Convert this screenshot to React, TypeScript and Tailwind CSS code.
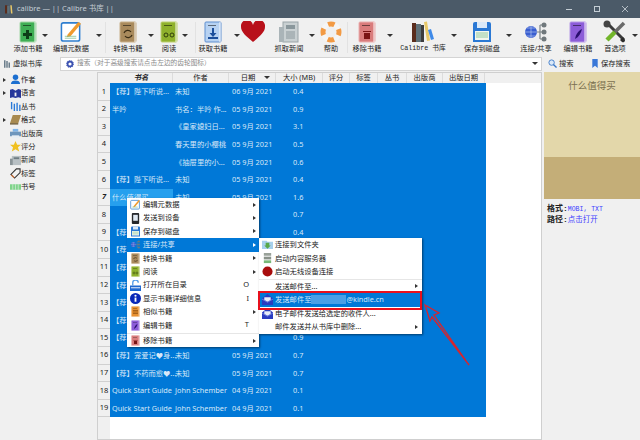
import type { ReactNode } from "react";

const cjk = "font-['Noto_Sans','Noto_Sans_CJK_SC',sans-serif]";

// little book used by most toolbar buttons
function Book({ fill, edge, children }: { fill: string; edge: string; children?: ReactNode }) {
  return (
    <svg viewBox="0 0 18 22" width="18" height="22">
      <rect x="1" y="1" width="16" height="20" rx="1" fill={fill} stroke={edge} strokeWidth="1" />
      <rect x="15" y="1" width="2" height="20" fill="#ffffff" opacity="0.45" />
      <rect x="4" y="4" width="8" height="1" fill="#000000" opacity="0.5" />
      {children}
    </svg>
  );
}

const icons: Record<string, ReactNode> = {
  add: (
    <Book fill="#3fae55" edge="#a5d8a8">
      <path d="M7 9h3v3h3v3h-3v3H7v-3H4v-3h3z" fill="#0d3d18" />
    </Book>
  ),
  meta: (
    <svg viewBox="0 0 24 24" width="23" height="23">
      <rect x="1.500" y="3" width="19" height="19" rx="2" fill="#fff" stroke="#2f7fd0" strokeWidth="1.600" />
      <path d="M8 15 19 2l3 2-11 13-4 1z" fill="#f09a2c" />
      <path d="M5 17h12M5 19h12" stroke="#7cc08a" strokeWidth="0.800" />
    </svg>
  ),
  convert: (
    <Book fill="#a98a5c" edge="#c9b08a">
      <path d="M5 12a4 4 0 0 1 7-1M13 14a4 4 0 0 1-7 1" fill="none" stroke="#3a2c14" strokeWidth="1.200" />
    </Book>
  ),
  read: (
    <Book fill="#8fb12c" edge="#bcd070">
      <circle cx="6" cy="14" r="2" fill="none" stroke="#2f3d0a" />
      <circle cx="12" cy="14" r="2" fill="none" stroke="#2f3d0a" />
    </Book>
  ),
  fetch: (
    <Book fill="#b7d2f2" edge="#5f8fd0">
      <path d="M8 7h2v5h2.500L9 16l-3.500-4H8zM4 16v2h10v-2" fill="#1c4f9c" />
    </Book>
  ),
  heart: (
    <svg viewBox="0 0 24 22" width="24" height="22">
      <path d="M12 21C5 15 0 11 0 6a6 6 0 0 1 12-2 6 6 0 0 1 12 2c0 5-5 9-12 15z" fill="#b8101a" />
    </svg>
  ),
  news: (
    <svg viewBox="0 0 22 22" width="22" height="22">
      <rect x="5" y="1" width="15" height="20" fill="#c9d0d2" stroke="#9aa4a8" />
      <rect x="1" y="6" width="5" height="15" fill="#aab4b8" />
      <rect x="8" y="4" width="9" height="4" fill="#8a979c" />
      <path d="M8 11h9M8 13h9M8 15h9M8 17h9" stroke="#7d8a8f" strokeWidth="0.800" />
    </svg>
  ),
  help: (
    <svg viewBox="0 0 22 22" width="22" height="22">
      <circle cx="11" cy="11" r="8" fill="none" stroke="#f5f5f5" strokeWidth="5" />
      <circle cx="11" cy="11" r="8" fill="none" stroke="#f29a44" strokeWidth="5" strokeDasharray="6.500 6.070" strokeDashoffset="3.200" />
    </svg>
  ),
  remove: (
    <Book fill="#d97c7c" edge="#eab0b0">
      <path d="M5 10h8v1H5zM6 12h6v6H6z" fill="#7a1414" />
    </Book>
  ),
  library: (
    <svg viewBox="0 0 24 22" width="24" height="22">
      <rect x="1" y="2" width="4" height="19" fill="#5a2c1c" />
      <rect x="5" y="3" width="5" height="18" fill="#5e7078" />
      <rect x="10" y="4" width="3" height="17" fill="#3c3c3c" />
      <path d="m13 1 3-.500 3 19-3 .500z" fill="#e8c868" />
      <path d="m17 9 3-1 3 10-3 1z" fill="#3f8ae8" />
    </svg>
  ),
  save: (
    <svg viewBox="0 0 20 22" width="20" height="22">
      <path d="M1 3a2 2 0 0 1 2-2h14a2 2 0 0 1 2 2v18H1z" fill="#2a78d4" />
      <rect x="5" y="1" width="10" height="6" fill="#dbe9f8" />
      <rect x="3" y="10" width="14" height="9" fill="#f2f6ee" />
      <path d="M4 12h12M4 14h12M4 16h12" stroke="#7cc08a" strokeWidth="0.800" />
    </svg>
  ),
  connect: (
    <svg viewBox="0 0 26 22" width="26" height="22">
      <path d="M13 11h4M17 4v14M17 4h3M17 11h3M17 18h3" stroke="#7a8286" strokeWidth="1.200" fill="none" />
      <circle cx="21" cy="4" r="2.500" fill="#70787c" />
      <circle cx="21" cy="11" r="2.500" fill="#70787c" />
      <circle cx="21" cy="18" r="2.500" fill="#70787c" />
      <circle cx="8" cy="11" r="6" fill="#3a5fd0" />
      <path d="M2 11h12M8 5v12M4 7h8M4 15h8" stroke="#c4d4f4" strokeWidth="0.600" />
    </svg>
  ),
  edit: (
    <Book fill="#8c5cd8" edge="#b79ae6">
      <path d="M6 18c1-5 3-8 7-10-1 4-3 8-7 10z" fill="#2a0f70" />
    </Book>
  ),
  prefs: (
    <svg viewBox="0 0 24 24" width="24" height="24">
      <path d="M3 2 21 20" stroke="#3a3a3a" strokeWidth="3" />
      <path d="m21 3-9 9" stroke="#6a6a6a" strokeWidth="3.500" />
      <path d="M12 12 4 20" stroke="#72b52a" strokeWidth="4.500" />
      <circle cx="4" cy="4" r="3.500" fill="#444" />
      <path d="M22 20a2 2 0 0 1-3 2l-2-2 3-3z" fill="#2c2c2c" />
    </svg>
  ),
  device: (
    <svg viewBox="0 0 10 12">
      <rect x="1" y="0" width="8" height="12" rx="1" fill="#26282c" />
      <rect x="2.500" y="2" width="5" height="6.500" fill="#dfe8f2" />
    </svg>
  ),
  similar: (
    <Book fill="#e89030" edge="#f0b878">
      <path d="M4 9h10M4 12h10M4 15h10" stroke="#7a4208" strokeWidth="1.200" />
    </Book>
  ),
  openDir: (
    <svg viewBox="0 0 12 12">
      <path d="M0 6h12v6H0z" fill="#1f68d0" />
      <path d="M3 6V3a3 3 0 0 1 6 0" fill="none" stroke="#5aa0e8" strokeWidth="1.500" />
      <path d="M1 8h10v1H1z" fill="#fff" />
    </svg>
  ),
  info: (
    <svg viewBox="0 0 12 12">
      <circle cx="6" cy="6" r="6" fill="#0a28b8" />
      <circle cx="6" cy="3" r="1.200" fill="#fff" />
      <path d="M5 5h2v4.500H5z" fill="#fff" />
    </svg>
  ),
  folder: (
    <svg viewBox="0 0 12 12">
      <path d="M0 2h5l1 1h6v8H0z" fill="#a8d0ec" />
      <path d="M4 4h4v3h1.500L6 10.500 2.500 7H4z" fill="#58a848" />
    </svg>
  ),
  server: (
    <svg viewBox="0 0 10 12">
      <rect x="1" y="0" width="8" height="3" fill="#9aa29a" />
      <rect x="1" y="4" width="8" height="3" fill="#8a928a" />
      <rect x="1" y="8" width="8" height="3" fill="#78b878" />
    </svg>
  ),
  wireless: (
    <svg viewBox="0 0 12 12">
      <circle cx="6" cy="6" r="5.500" fill="#a80c0c" />
    </svg>
  ),
  mail: (
    <svg viewBox="0 0 12 12">
      <path d="M0 5 6 0l6 5v7H0z" fill="#2a3cc0" />
      <path d="M2.500 3.500h7v3L6 8.500l-3.500-2z" fill="#e6ecf8" />
      <path d="M0 5.500 6 9l6-3.500" fill="none" stroke="#7f90e8" strokeWidth="0.800" />
    </svg>
  ),
};

// gap, caret and line are offsets against the reference's toolbar positions
const toolbar: { label: string; icon: string; width: number; gap: number; caret?: number; line?: number; mono?: boolean }[] = [
  { label: "添加书籍", icon: "add", width: 36, gap: 8, caret: -4 },
  { label: "编辑元数据", icon: "meta", width: 40, gap: 5, caret: 5 },
  { label: "转换书籍", icon: "convert", width: 36, gap: 19, caret: 2, line: -5 },
  { label: "阅读", icon: "read", width: 24, gap: 11, caret: 1 },
  { label: "获取书籍", icon: "fetch", width: 36, gap: 14, caret: 3, line: 0 },
  { label: "", icon: "heart", width: 26, gap: 9 },
  { label: "抓取新闻", icon: "news", width: 36, gap: 5, caret: 2 },
  { label: "帮助", icon: "help", width: 24, gap: 12 },
  { label: "移除书籍", icon: "remove", width: 36, gap: 6, caret: 2, line: -2 },
  { label: "Calibre 书库", icon: "library", width: 60, gap: 8, caret: -2, mono: true },
  { label: "保存到磁盘", icon: "save", width: 44, gap: 7, caret: 2 },
  { label: "连接/共享", icon: "connect", width: 36, gap: 14 },
  { label: "编辑书籍", icon: "edit", width: 36, gap: 6 },
  { label: "首选项", icon: "prefs", width: 28, gap: 5, caret: 3 },
];

function Caret({ className = "" }: { className?: string }) {
  return <span className={`h-0 w-0 border-x-[3px] border-t-[3px] border-x-transparent border-t-[#333] ${className}`} />;
}

function SubArrow({ light }: { light?: boolean }) {
  return <span className={`ml-auto h-0 w-0 border-y-[2px] border-l-[3px] border-y-transparent ${light ? "border-l-white" : "border-l-[#333]"}`} />;
}

const sideItems: [string, string, boolean][] = [
  ["作者", "author", true],
  ["语言", "lang", true],
  ["丛书", "series", false],
  ["格式", "format", true],
  ["出版商", "pub", false],
  ["评分", "star", false],
  ["新闻", "news", false],
  ["标签", "tag", false],
  ["书号", "isbn", false],
];

const sideIcons: Record<string, ReactNode> = {
  author: (
    <svg viewBox="0 0 12 12" width="11" height="11">
      <circle cx="6" cy="3.500" r="3" fill="#1c6fd0" />
      <path d="M1 11c0-3 2-4 5-4s5 1 5 4z" fill="#1c6fd0" />
    </svg>
  ),
  lang: (
    <svg viewBox="0 0 12 12" width="11" height="11">
      <path d="M0 2l3-1 3 2 3-2 3 1v9l-3-1-3 1-3-1-3 1z" fill="#27379a" />
      <path d="M5 5l2 0v4H5z" fill="#f0f0f0" />
    </svg>
  ),
  series: (
    <svg viewBox="0 0 12 12" width="11" height="11">
      <path d="M1 1h1.500v8H1zM4 3h1.500v8H4zM7 2h1.500v9H7zM10 4h1.500v7H10z" fill="#2a7ad8" />
    </svg>
  ),
  format: (
    <svg viewBox="0 0 12 12" width="11" height="11">
      <path d="M3 1h9l-3 9H0z" fill="#a88a50" />
      <path d="M0 10h9v1.500H0z" fill="#6f5a30" />
    </svg>
  ),
  pub: (
    <svg viewBox="0 0 12 12" width="11" height="11">
      <path d="M3 1h6v3H3z" fill="#7fb4e8" />
      <path d="M0 4h12v5H0z" fill="#6f96bc" />
      <path d="M2 8h8v3H2z" fill="#e8eef4" />
    </svg>
  ),
  star: (
    <svg viewBox="0 0 12 12" width="11" height="11">
      <path d="m6 0 1.800 4H12L8.700 6.800 10 11.500 6 9l-4 2.500 1.300-4.700L0 4h4.200z" fill="#f0c020" />
    </svg>
  ),
  news: (
    <svg viewBox="0 0 12 12" width="11" height="11">
      <rect x="2" y="1" width="10" height="10" fill="#b8c0c4" />
      <rect x="0" y="4" width="3" height="7" fill="#8a9498" />
      <rect x="4" y="2.500" width="6" height="2" fill="#6f7c82" />
    </svg>
  ),
  tag: (
    <svg viewBox="0 0 12 12" width="11" height="11">
      <path d="M7 1h4v4l-6 6-4-4z" fill="#f2f2f2" stroke="#333" strokeWidth="1.200" />
      <path d="M2 7l3 3-1 1-3-3z" fill="#d8763a" />
    </svg>
  ),
  isbn: (
    <svg viewBox="0 0 12 12" width="12" height="12">
      <rect x="0" y="3" width="12" height="6" fill="#7fd48a" />
      <path d="M3 3v6M6 3v6M9 3v6" stroke="#f0f0f0" strokeWidth="0.600" />
    </svg>
  ),
};

const columns: [string, number, string?][] = [
  ["书名", 63, "font-bold italic"],
  ["作者", 56],
  ["日期", 47, "pr-[8px]"],
  ["大小 (MB)", 47],
  ["评分", 27],
  ["标签", 28],
  ["丛书", 29],
  ["出版商", 36],
  ["出版日期", 42],
];

// rows 8 to 15 sit behind the context menus, only what shows past them is filled in
const rows: [string, string, string, string][] = [
  ["【荐】陛下听说...", "未知", "06 9月 2021", "0.4"],
  ["半吟", "书名：半吟 作...", "05 9月 2021", "0.9"],
  ["", "《皇家媳妇日...", "05 9月 2021", "3.1"],
  ["", "春天里的小樱桃", "05 9月 2021", "0.5"],
  ["", "《抽屉里的小...", "05 9月 2021", "0.6"],
  ["【荐】陛下听说...", "未知", "05 9月 2021", "0.4"],
  ["什么值得买", "未知", "05 9月 2021", "1.6"],
  ["", "", "", "0.7"],
  ["【荐", "", "", "0.4"],
  ["【荐", "", "", ""],
  ["【荐", "", "", ""],
  ["【荐", "", "", ""],
  ["【荐", "", "", ""],
  ["【荐", "", "", ""],
  ["【荐", "", "", "0.9"],
  ["【荐】宠爱记♥身...", "未知", "05 9月 2021", "0.7"],
  ["【荐】不药而愈♥...", "未知", "05 9月 2021", "0.7"],
  ["Quick Start Guide", "John Schember", "04 9月 2021", "0.1"],
  ["Quick Start Guide", "John Schember", "04 9月 2021", "0.1"],
];

function MenuIcon({ name }: { name: string }) {
  return <span className="flex h-[11px] w-[11px] items-center justify-center [&>svg]:h-full [&>svg]:w-full">{icons[name]}</span>;
}

const menuOne: { label: string; icon: string; arrow?: boolean; hotkey?: string; active?: boolean; line?: boolean }[] = [
  { label: "编辑元数据", icon: "meta", arrow: true },
  { label: "发送到设备", icon: "device", arrow: true },
  { label: "保存到磁盘", icon: "save", arrow: true },
  { label: "连接/共享", icon: "connect", arrow: true, active: true },
  { label: "转换书籍", icon: "convert", arrow: true },
  { label: "阅读", icon: "read", arrow: true },
  { label: "打开所在目录", icon: "openDir", hotkey: "O" },
  { label: "显示书籍详细信息", icon: "info", hotkey: "I" },
  { label: "相似书籍", icon: "similar", arrow: true },
  { label: "编辑书籍", icon: "edit", hotkey: "T" },
  { label: "移除书籍", icon: "remove", arrow: true, line: true },
];

const menuTwo: { label: string; icon?: string; arrow?: boolean; line?: boolean; email?: boolean }[] = [
  { label: "连接到文件夹", icon: "folder" },
  { label: "启动内容服务器", icon: "server" },
  { label: "启动无线设备连接", icon: "wireless" },
  { label: "发送邮件至...", arrow: true, line: true },
  { label: "发送邮件至", icon: "mail", email: true },
  { label: "电子邮件发送给选定的收件人...", icon: "mail" },
  { label: "邮件发送并从书库中删除...", arrow: true },
];

export default function App() {
  return (
    <div className={`relative flex h-[440px] w-[640px] flex-col overflow-hidden bg-[#f0f0f0] text-[7.300px] leading-none text-[#222] ${cjk}`}>
      {/* title bar */}
      <div className="flex h-[18px] items-center bg-[#4b5a68] pl-[5px] text-[#c4cdd4]">
        <svg viewBox="0 0 12 12" width="9" height="10">
          <path d="M0 1h3v11H0z" fill="#5a2c1c" />
          <path d="M3 2h3v10H3z" fill="#5e7078" />
          <path d="m7 1 2 0 1 11H8z" fill="#e8c868" />
        </svg>
        <span className="ml-[3px] text-[7.500px]">calibre — || Calibre 书库 ||</span>
        <div className="ml-auto flex items-center gap-[22px] pr-[12px]">
          <span className="h-px w-[6px] bg-[#c4cdd4]" />
          <span className="h-[6px] w-[6px] border border-[#c4cdd4]" />
          <svg viewBox="0 0 7 7" width="6" height="6">
            <path d="m0 0 7 7M7 0 0 7" stroke="#c4cdd4" />
          </svg>
        </div>
      </div>

      {/* toolbar */}
      <div className="flex h-[38px] items-stretch pl-[2px] pt-[1px]">
        {toolbar.map((t) => (
          <div key={t.icon} className="relative flex flex-col items-center justify-between pb-[4px]" style={{ width: t.width, marginLeft: t.gap }}>
            <div className="flex h-[25px] items-center">{icons[t.icon]}</div>
            <span className={`whitespace-nowrap ${t.mono ? "font-['Liberation_Mono','Noto_Sans_CJK_SC',monospace] text-[6.700px]" : "text-[7.200px]"}`}>{t.label}</span>
            {t.caret !== undefined && (
              <span className="absolute left-full top-[15px] flex" style={{ marginLeft: t.caret }}>
                <Caret />
              </span>
            )}
            {t.line !== undefined && <span className="absolute bottom-[3px] top-[3px] w-px bg-[#e2e2e2]" style={{ left: t.line }} />}
          </div>
        ))}
      </div>

      {/* search row */}
      <div className="flex h-[15px] items-center">
        <div className="flex w-[60px] items-center gap-[3px] pl-[4px]">
          <svg viewBox="0 0 8 10" width="6" height="8">
            <path d="M0 0h2v10H0zM3 1h2v9H3zM6 3h2v7H6z" fill="#6a7c8a" />
          </svg>
          <span>虚拟书库</span>
        </div>
        <div className="flex h-[14px] flex-1 items-center gap-[3px] border border-[#d4d4d4] bg-white pl-[5px] text-[6.700px] text-[#8a8a8a]">
          <svg viewBox="0 0 10 10" width="8" height="8">
            <circle cx="5" cy="5" r="3" fill="none" stroke="#3a50b0" strokeWidth="2" />
            <circle cx="5" cy="5" r="4.500" fill="none" stroke="#3a50b0" strokeWidth="1.200" strokeDasharray="1.500 1.300" />
          </svg>
          <span>搜索（对于高级搜索请点击左边的齿轮图标）</span>
          <Caret className="ml-auto mr-[3px]" />
        </div>
        <div className="flex w-[50px] items-center gap-[2px] pl-[6px]">
          <svg viewBox="0 0 10 10" width="9" height="9">
            <circle cx="4" cy="4" r="3" fill="#dbe9f8" stroke="#3a78c8" />
            <path d="m6 6 3.500 3.500" stroke="#3a78c8" strokeWidth="1.500" />
          </svg>
          <span>搜索</span>
        </div>
        <div className="flex w-[48px] items-center gap-[3px]">
          <svg viewBox="0 0 6 10" width="6" height="9">
            <path d="M0 0h6v10L3 7.500 0 10z" fill="#3a78d8" />
          </svg>
          <span>保存搜索</span>
        </div>
      </div>

      {/* main */}
      <div className="flex min-h-0 flex-1 pt-px">
        <div className="flex w-[97px] flex-col pl-[3px] pt-px">
          {sideItems.map(([label, key, arrow]) => (
            <div key={key} className="flex h-[13.400px] items-center">
              <span className="flex w-[7px] items-center">
                {arrow && <span className="h-0 w-0 border-y-[2px] border-l-[3px] border-y-transparent border-l-[#333]" />}
              </span>
              <span className="flex w-[11px] justify-center">{sideIcons[key]}</span>
              <span>{label}</span>
            </div>
          ))}
        </div>

        <div className="flex w-[445px] flex-col border border-[#cfcfcf] bg-white">
          <div className="flex h-[10px] bg-[#f0f0f0] pl-[12px]">
            {columns.map(([name, w, extra]) => (
              <div key={name} className={`relative flex items-center justify-center border-r border-[#dcdcdc] ${extra ?? ""}`} style={{ width: w }}>
                {name}
                {name === "日期" && <Caret className="absolute right-[5px] top-[3px] border-x-[2px] border-t-[2px]" />}
              </div>
            ))}
          </div>
          <div className="flex min-h-0 flex-1">
            <div className="flex w-[12px] flex-col bg-[#f0f0f0]">
              {rows.map((_, i) => (
                <div key={i} className={`flex h-[17.600px] shrink-0 items-center justify-center border-b border-[#d0d0d0] text-[7.500px] ${i === 6 ? "font-bold italic" : ""}`}>{i + 1}</div>
              ))}
            </div>
            <div className="flex w-[376px] flex-col self-start bg-[#0078d7] text-[#d8e8f8]">
              {rows.map((r, i) => (
                <div key={i} className="flex h-[17.600px] items-center">
                  <span className={`flex h-full w-[63px] items-center whitespace-nowrap pl-[2px] ${i === 6 ? "bg-[#26a0ee]" : ""}`}>{r[0]}</span>
                  <span className="w-[59px] whitespace-nowrap pl-[2px]">{r[1]}</span>
                  <span className="w-[61px] whitespace-nowrap">{r[2]}</span>
                  <span>{r[3]}</span>
                </div>
              ))}
            </div>
          </div>
        </div>

        <div className="ml-[2px] flex w-[96px] flex-col">
          <div className="flex h-[85px] justify-center bg-[#e3d7aa] pt-[9px] text-[9.500px] text-[#7a6f4f]">什么值得买</div>
          <div className="h-[42px] bg-[#c4ae78]" />
          <div className="flex flex-col gap-[2px] pl-[3px] pt-[6px] text-[8px] font-['Liberation_Mono','Noto_Sans_CJK_SC',monospace]">
            <div className="font-bold">格式:<span className="text-[6.500px] font-normal text-[#4040ff]">MOBI, TXT</span></div>
            <div className="font-bold">路径:<span className="text-[7.500px] font-normal text-[#4040ff]">点击打开</span></div>
          </div>
        </div>
      </div>

      {/* context menu */}
      <div className="absolute left-[127px] top-[198px] flex w-[132px] flex-col bg-white shadow-[1px_1px_2px_rgba(0,0,0,0.5)]">
        {menuOne.map((m) => (
          <div key={m.label} className={m.line ? "mt-px border-t border-[#e6e6e6]" : ""}>
            <div className={`flex h-[13.400px] items-center pl-[3px] pr-[3px] ${m.active ? "bg-[#0078d7] text-[#d8e8f8]" : ""}`}>
              <MenuIcon name={m.icon} />
              <span className="ml-[2px]">{m.label}</span>
              {m.hotkey && <span className="ml-auto mr-[7px] text-[7.500px]">{m.hotkey}</span>}
              {m.arrow && <SubArrow light={m.active} />}
            </div>
          </div>
        ))}
      </div>

      {/* send-to submenu */}
      <div className="absolute left-[259px] top-[238px] flex w-[163px] flex-col bg-white shadow-[1px_1px_2px_rgba(0,0,0,0.5)]">
        {menuTwo.map((m) => (
          <div key={m.label} className={m.line ? "border-t border-[#e6e6e6]" : ""}>
            <div className={`flex h-[13.500px] items-center pl-[3px] pr-[4px] ${m.email ? "bg-[#0078d7] text-[#d8e8f8]" : ""}`}>
              <span className="flex w-[11px] justify-center">{m.icon && <MenuIcon name={m.icon} />}</span>
              <span className="ml-[2px]">{m.label}</span>
              {m.email && <span className="h-[9px] w-[35px] bg-[#4a9fe6]" />}
              {m.email && <span>@kindle.cn</span>}
              {m.arrow && <SubArrow />}
            </div>
          </div>
        ))}
      </div>

      {/* annotation */}
      <div className="absolute left-[258px] top-[291px] h-[19px] w-[164px] border-2 border-[#e8101c]" />
      <svg className="absolute left-[420px] top-[300px]" width="55" height="70" viewBox="0 0 55 70">
        <path d="M5 5 19 13l-5 2 35 50L12 17l-2 4z" fill="none" stroke="#d8242c" strokeWidth="1.300" />
      </svg>
    </div>
  );
}
